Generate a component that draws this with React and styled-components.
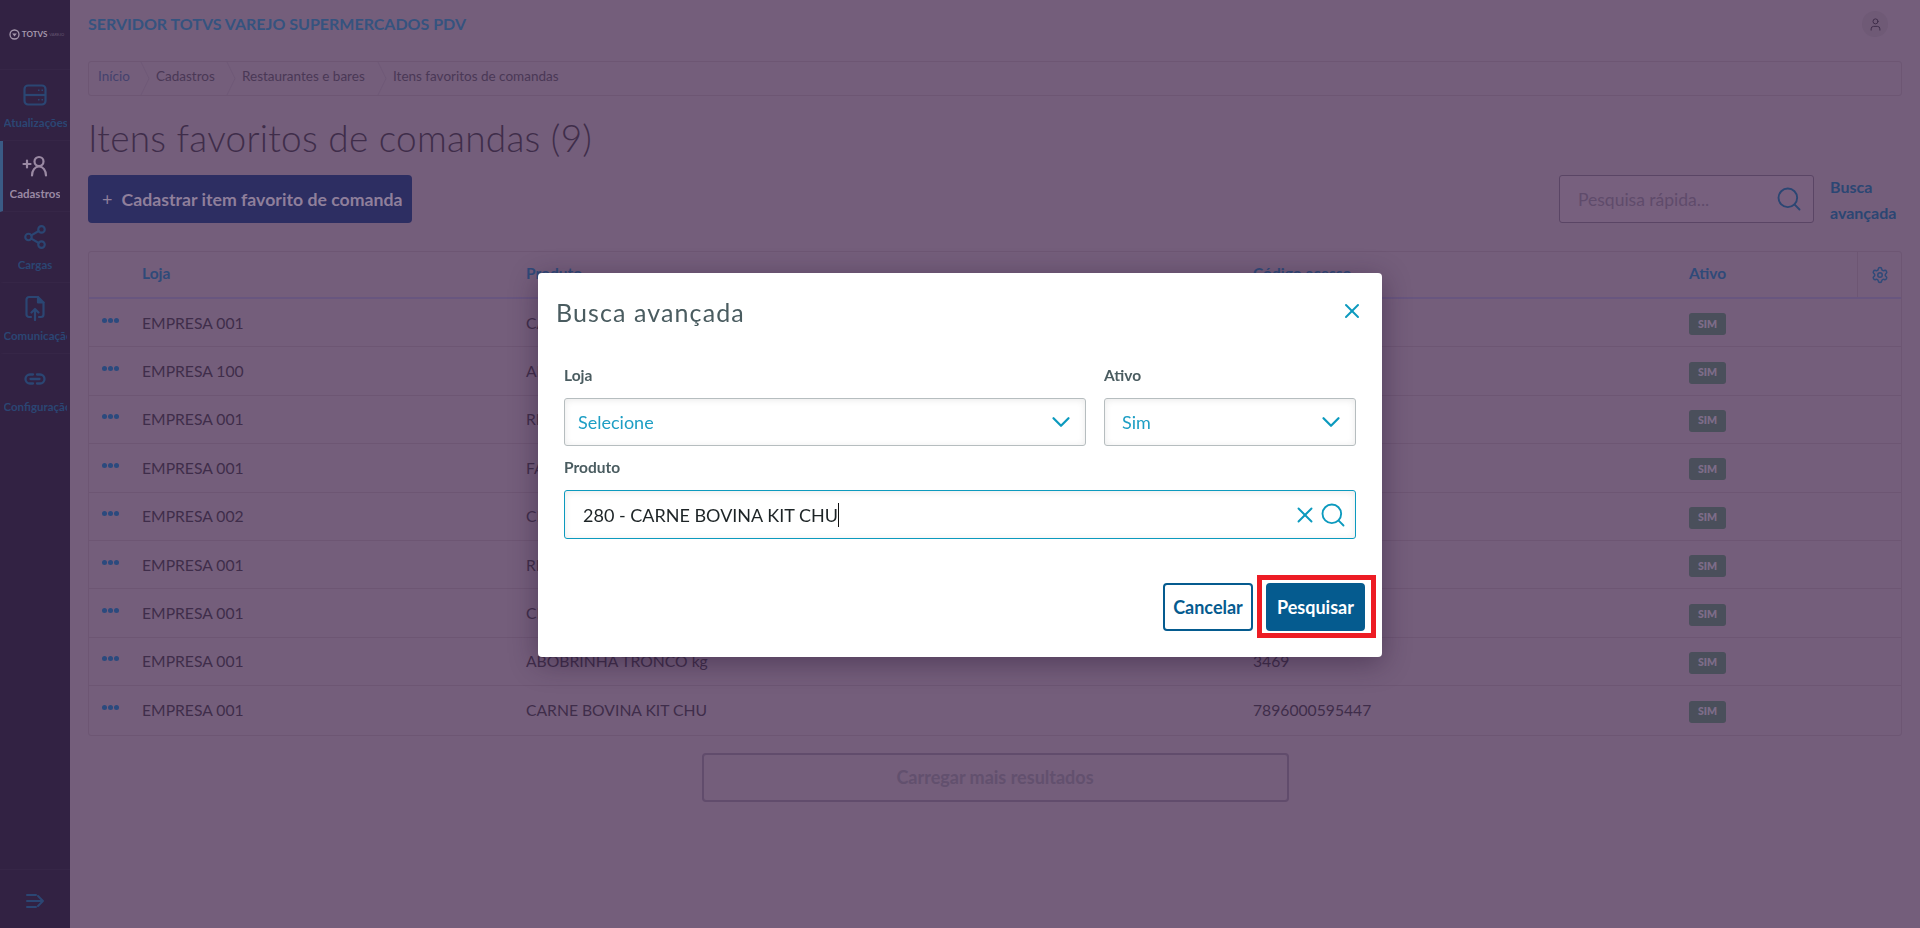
import React from 'react';
import styled, { createGlobalStyle } from 'styled-components';
import { ChevronDown, X, Search, Share2, Settings, User } from 'lucide-react';

const FONT = `"Lato", "Open Sans", "Noto Sans", sans-serif`;
const BG = '#745e7b';
const LINE = '#6d5673';
const BLUE = '#2b4673';
const INK = '#3f2d4a';
const TEAL = '#0c9abe';

const Global = createGlobalStyle`
  * { box-sizing: border-box; }
  html, body { margin: 0; height: 100%; background: ${BG}; font-family: ${FONT}; overflow: hidden; }
`;

const Shell = styled.div`display: flex; height: 928px; background: ${BG};`;
const Sidebar = styled.nav`width: 70px; flex: none; background: #322243; display: flex; flex-direction: column;`;
const Logo = styled.div`
  height: 70px; display: flex; align-items: center; justify-content: center; gap: 2px; padding: 0 0 1px 3px;
  color: #a598ad; border-bottom: 1px solid #362647;
`;
const LogoMark = styled.b`font-size: 8px; font-weight: 700;`;
const LogoSub = styled.span`font-size: 4px; opacity: .45;`;
const NavItem = styled.div`
  height: 71px; display: flex; flex-direction: column; align-items: center; padding: 11px 3px 0 0; gap: 7px;
  border-bottom: 1px solid #362647; overflow: hidden; white-space: nowrap;
  color: ${p => (p.$active ? '#9a89a3' : BLUE)};
  border-left: 3px solid ${p => (p.$active ? '#3a5b85' : 'transparent')};
  &:nth-of-type(6) { border-bottom: 0; }
`;
const NavIconBox = styled.span`height: 28px; display: flex; align-items: center; justify-content: center;`;
const NavLabel = styled.span`font-size: 11.5px; font-weight: 700; line-height: 14px; max-width: 63px; overflow: hidden;`;
const NavSpacer = styled.div`flex: 1;`;
const NavFoot = styled.div`height: 59px; border-top: 1px solid #362647; display: flex; align-items: center; justify-content: center; padding-top: 4px; color: ${BLUE};`;

const Main = styled.main`flex: 1; padding: 0 18px; min-width: 0;`;
const TopBar = styled.header`height: 50px; display: flex; align-items: center; justify-content: space-between; padding: 0 14px 2px 0;`;
const AppTitle = styled.div`font-size: 16px; font-weight: 700; color: #35537f; margin-top: -2px;`;
const Avatar = styled.div`width: 26px; height: 26px; border-radius: 50%; background: #6f5a76; display: flex; align-items: center; justify-content: center; color: ${INK};`;
const Crumbs = styled.div`
  margin-top: 11px; height: 35px; border: 1px solid ${LINE}; border-radius: 3px; display: flex; align-items: center;
  padding-left: 9px; font-size: 13.5px; color: #4a3856;
`;
const Crumb = styled.span`
  display: inline-flex; align-items: center; height: 100%; white-space: nowrap; width: ${p => p.$w}px;
`;
const CrumbText = styled.span`margin-top: -5px; color: ${p => (p.$first ? '#44426e' : '#4a3856')};`;
const CrumbChevron = styled.svg`flex: none; margin-left: auto; margin-right: 6px;`;
const PageTitle = styled.h1`margin: 19px 0 0; height: 45px; line-height: 45px; font-size: 37px; font-weight: 300; color: ${INK}; letter-spacing: .25px;`;
const ActionRow = styled.div`margin-top: 15px; height: 48px; display: flex; align-items: stretch;`;
const PrimaryAction = styled.div`
  width: 324px; background: #2d2e62; border-radius: 4px; display: flex; align-items: center; padding-left: 14px; gap: 9px;
  color: #8f7f9b; font-size: 17.7px; font-weight: 700; white-space: nowrap;
`;
const PlusSign = styled.span`font-weight: 400; font-size: 18px;`;
const QuickSearch = styled.div`
  margin-left: auto; width: 255px; border: 1px solid #5a4565; border-radius: 3px; display: flex; align-items: center;
  justify-content: space-between; padding: 0 10px 0 18px; color: #5f4b6b; font-size: 17.5px; background: #77607e;
`;
const SearchGlyph = styled.span`color: ${BLUE}; display: flex;`;
const AdvancedLink = styled.div`width: 72px; margin-left: 16px; font-size: 16px; font-weight: 700; color: ${BLUE}; line-height: 26px; margin-top: -1px; white-space: pre-line;`;

const Table = styled.section`margin-top: 28px; border: 1px solid ${LINE}; border-radius: 3px;`;
const HeadRow = styled.div`
  display: grid; grid-template-columns: 53px 384px 727px 436px 168px 44px; height: 47px; align-items: center;
  border-bottom: 2px solid #68567f; font-size: 15.5px; font-weight: 700; color: #2f4a79;
`;
const HeadCell = styled.span`margin-top: -3px;`;
const GearCell = styled.div`height: 100%; border-left: 1px solid ${LINE}; display: flex; align-items: center; justify-content: center;`;
const Row = styled.div`
  display: grid; grid-template-columns: 53px 384px 727px 436px 212px; height: 48.4px; align-items: center;
  border-bottom: 1px solid ${LINE}; font-size: 15.7px; color: ${INK};
  &:last-child { border-bottom: 0; }
`;
const Dots = styled.div`display: flex; gap: 1px; padding-left: 13px; margin-top: -5px;`;
const Dot = styled.i`width: 5px; height: 5px; border-radius: 50%; background: #2b4a7e;`;
const BadgeCell = styled.span`display: flex; padding-top: 3px;`;
const Badge = styled.span`
  width: 37px; height: 22px; border-radius: 3px; background: #4a4f5b; color: #7d6c88; font-size: 10.5px; font-weight: 800;
  display: inline-flex; align-items: center; justify-content: center; padding-bottom: 1px;
`;
const LoadMore = styled.div`
  margin: 17px auto 0; width: 587px; height: 49px; border: 2px solid #614c6c; border-radius: 4px; display: flex;
  align-items: center; justify-content: center; font-size: 18px; font-weight: 700; color: #62506e;
`;

const Overlay = styled.div`position: fixed; inset: 0; display: flex; align-items: center; justify-content: center; padding-top: 2px;`;
const Modal = styled.div`
  width: 844px; height: 384px; background: #fff; border-radius: 4px; box-shadow: 0 6px 28px rgba(40, 20, 50, .45);
  display: flex; flex-direction: column;
`;
const ModalHead = styled.div`height: 78px; display: flex; align-items: center; justify-content: space-between; padding: 0 18px; margin-top: -1px;`;
const ModalTitle = styled.h2`margin: 2px 0 0; font-size: 25px; font-weight: 400; color: #4a5c60; letter-spacing: 1.1px;`;
const CloseBtn = styled.span`color: ${TEAL}; display: flex;`;
const Form = styled.div`padding: 15px 26px 0; display: grid; grid-template-columns: 522px 252px; column-gap: 18px;`;
const Field = styled.div`grid-column: ${p => p.$span || 'auto'}; margin-bottom: ${p => p.$mb || 0}px;`;
const Label = styled.div`height: 20px; line-height: 20px; font-size: 15.5px; font-weight: 700; color: #4a5c60; margin-bottom: 13px;`;
const Control = styled.div`
  display: flex; align-items: center; justify-content: space-between;
  height: ${p => p.$h || 48}px; border-radius: 3px; border: 1px solid ${p => (p.$focus ? TEAL : '#b6bdbf')};
  box-shadow: inset 0 1px 7px rgba(0, 0, 0, .09); padding: 0 ${p => p.$pr || 9}px 0 ${p => p.$pl || 13}px;
  color: ${TEAL}; font-size: 18px;
`;
const SelectText = styled.span`color: #1d9ec4; margin-top: -1px;`;
const InputText = styled.span`color: #1d2426; font-size: 18px; display: inline-flex; align-items: center; white-space: nowrap;`;
const Caret = styled.i`width: 1px; height: 24px; background: #111;`;
const InputIcons = styled.span`display: flex; align-items: center; gap: 1px;`;
const Footer = styled.div`margin-top: 44px; padding-right: 17px; display: flex; justify-content: flex-end; gap: 13px;`;
const ModalBtn = styled.div`
  position: relative; height: 48px; width: ${p => p.$w}px; border-radius: 4px; display: flex; align-items: center; justify-content: center;
  font-size: 18px; font-weight: 700;
  background: ${p => (p.$primary ? '#055b8f' : '#fff')};
  color: ${p => (p.$primary ? '#fff' : '#055b8f')};
  border: 2px solid #055b8f;
`;
const Highlight = styled.span`position: absolute; top: -10px; left: -11px; right: -13px; bottom: -9px; border: 5px solid #ed1c24; pointer-events: none;`;

const ServerIcon = () => (
  <svg width="24" height="22" viewBox="0 0 24 22" fill="none" stroke="currentColor" strokeWidth="2.2">
    <rect x="1.5" y="1.5" width="21" height="19" rx="3.5" />
    <path d="M1.5 11h21" />
    <path d="M15 6.3h1.5M18.5 6.3H20M15 15.8h1.5M18.5 15.8H20" strokeWidth="1.6" />
  </svg>
);
const AddUserIcon = () => (
  <svg width="26" height="22" viewBox="0 0 26 22" fill="none" stroke="currentColor" strokeWidth="2.2" strokeLinecap="round">
    <path d="M1.5 9h7M5 5.5v7" />
    <circle cx="17" cy="6.5" r="4.5" />
    <path d="M10 20.5c0-5 3-9 7-9s7 4 7 9" />
  </svg>
);
const FileUpIcon = () => (
  <svg width="20" height="26" viewBox="0 0 20 26" fill="none" stroke="currentColor" strokeWidth="2.2" strokeLinecap="round" strokeLinejoin="round">
    <path d="M6 22H4a2.5 2.5 0 0 1-2.5-2.5v-15A2.5 2.5 0 0 1 4 2h9l5.5 5.5v12A2.5 2.5 0 0 1 16 22h-2" />
    <path d="M13 2v5.5h5.5" fill="currentColor" />
    <path d="M10 25V14M6.5 17.5 10 14l3.5 3.5" />
  </svg>
);
const LinkIcon = () => (
  <svg width="24" height="14" viewBox="0 0 24 14" fill="none" stroke="currentColor" strokeWidth="2.3" strokeLinecap="round">
    <path d="M10 2.5H7a4.5 4.5 0 0 0 0 9h3" />
    <path d="M14 2.5h3a4.5 4.5 0 0 1 0 9h-3" />
    <path d="M7.5 7h9" />
  </svg>
);
const CollapseIcon = () => (
  <svg width="19" height="16" viewBox="0 0 19 16" fill="none" stroke="currentColor" strokeWidth="2" strokeLinecap="round" strokeLinejoin="round">
    <path d="M1 2h9M1 8h16M1 14h9M12 3l5 5-5 5" />
  </svg>
);
const ClockMark = () => (
  <svg width="11" height="11" viewBox="0 0 11 11" fill="none" stroke="currentColor" strokeWidth="1.3">
    <circle cx="5.5" cy="5.5" r="4.5" />
    <path d="M3.2 4.5h4.6L5.5 7.5z" fill="currentColor" stroke="none" />
  </svg>
);
const Chevron = () => (
  <CrumbChevron width="10" height="33" viewBox="0 0 10 33" fill="none" stroke="#6f5977">
    <path d="M1 0l8 16.5L1 33" />
  </CrumbChevron>
);

const nav = [
  { label: 'Atualizações', icon: <ServerIcon /> },
  { label: 'Cadastros', icon: <AddUserIcon />, active: true },
  { label: 'Cargas', icon: <Share2 size={26} strokeWidth={2} /> },
  { label: 'Comunicação', icon: <FileUpIcon /> },
  { label: 'Configuração', icon: <LinkIcon /> },
];

const rows = [
  ['EMPRESA 001', 'CARNE BOVINA', '1024'],
  ['EMPRESA 100', 'ALFACE', '2211'],
  ['EMPRESA 001', 'REFRIGERANTE', '3102'],
  ['EMPRESA 001', 'FARINHA', '4087'],
  ['EMPRESA 002', 'CEBOLA', '5120'],
  ['EMPRESA 001', 'REPOLHO', '6233'],
  ['EMPRESA 001', 'CENOURA', '7341'],
  ['EMPRESA 001', 'ABOBRINHA TRONCO kg', '3469'],
  ['EMPRESA 001', 'CARNE BOVINA KIT CHU', '7896000595447'],
];

export default function App() {
  return (
    <>
      <Global />
      <Shell>
        <Sidebar>
          <Logo>
            <ClockMark />
            <LogoMark>TOTVS</LogoMark>
            <LogoSub>VAREJO</LogoSub>
          </Logo>
          {nav.map(n => (
            <NavItem key={n.label} $active={n.active}>
              <NavIconBox>{n.icon}</NavIconBox>
              <NavLabel>{n.label}</NavLabel>
            </NavItem>
          ))}
          <NavSpacer />
          <NavFoot><CollapseIcon /></NavFoot>
        </Sidebar>
        <Main>
          <TopBar>
            <AppTitle>SERVIDOR TOTVS VAREJO SUPERMERCADOS PDV</AppTitle>
            <Avatar><User size={15} strokeWidth={1.6} /></Avatar>
          </TopBar>
          <Crumbs>
            <Crumb $w={58}><CrumbText $first>Início</CrumbText><Chevron /></Crumb>
            <Crumb $w={86}><CrumbText>Cadastros</CrumbText><Chevron /></Crumb>
            <Crumb $w={151}><CrumbText>Restaurantes e bares</CrumbText><Chevron /></Crumb>
            <Crumb><CrumbText>Itens favoritos de comandas</CrumbText></Crumb>
          </Crumbs>
          <PageTitle>Itens favoritos de comandas (9)</PageTitle>
          <ActionRow>
            <PrimaryAction><PlusSign>+</PlusSign>Cadastrar item favorito de comanda</PrimaryAction>
            <QuickSearch>
              Pesquisa rápida...
              <SearchGlyph><Search size={28} strokeWidth={1.6} /></SearchGlyph>
            </QuickSearch>
            <AdvancedLink>Busca{'\n'}avançada</AdvancedLink>
          </ActionRow>
          <Table>
            <HeadRow>
              <span />
              <HeadCell>Loja</HeadCell>
              <HeadCell>Produto</HeadCell>
              <HeadCell>Código acesso</HeadCell>
              <HeadCell>Ativo</HeadCell>
              <GearCell><Settings size={18} strokeWidth={2} /></GearCell>
            </HeadRow>
            {rows.map((r, i) => (
              <Row key={i}>
                <Dots><Dot /><Dot /><Dot /></Dots>
                <span>{r[0]}</span>
                <span>{r[1]}</span>
                <span>{r[2]}</span>
                <BadgeCell><Badge>SIM</Badge></BadgeCell>
              </Row>
            ))}
          </Table>
          <LoadMore>Carregar mais resultados</LoadMore>
        </Main>
      </Shell>
      <Overlay>
        <Modal>
          <ModalHead>
            <ModalTitle>Busca avançada</ModalTitle>
            <CloseBtn><X size={24} strokeWidth={2} /></CloseBtn>
          </ModalHead>
          <Form>
            <Field $mb={11}>
              <Label>Loja</Label>
              <Control><SelectText>Selecione</SelectText><ChevronDown size={30} strokeWidth={1.8} /></Control>
            </Field>
            <Field $mb={11}>
              <Label>Ativo</Label>
              <Control $pl={17}><SelectText>Sim</SelectText><ChevronDown size={30} strokeWidth={1.8} /></Control>
            </Field>
            <Field $span="1 / span 2">
              <Label>Produto</Label>
              <Control $focus $h={49} $pl={18} $pr={8}>
                <InputText>280 - CARNE BOVINA KIT CHU<Caret /></InputText>
                <InputIcons><X size={26} strokeWidth={1.8} /><Search size={28} strokeWidth={1.6} /></InputIcons>
              </Control>
            </Field>
          </Form>
          <Footer>
            <ModalBtn $w={90}>Cancelar</ModalBtn>
            <ModalBtn $primary $w={99}>Pesquisar<Highlight /></ModalBtn>
          </Footer>
        </Modal>
      </Overlay>
    </>
  );
}
